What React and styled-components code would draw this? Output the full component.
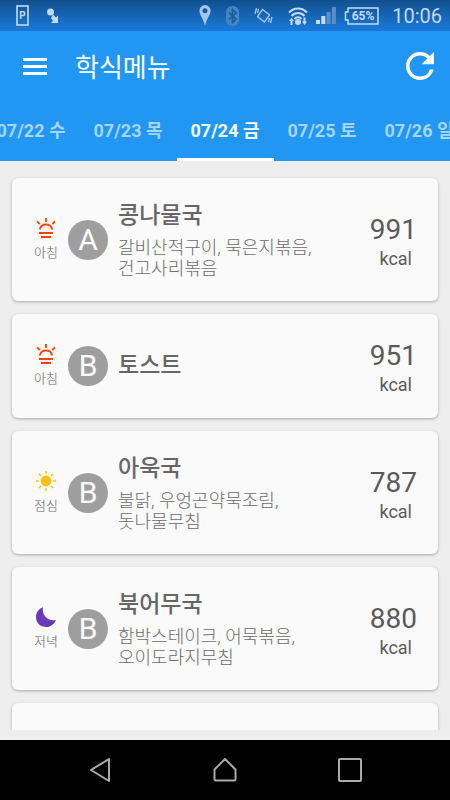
import React from 'react';
import styled, { createGlobalStyle } from 'styled-components';

const GlobalStyle = createGlobalStyle`
  * { box-sizing: border-box; }
  body {
    margin: 0;
    background: #eeeeee;
    font-family: Roboto, "Noto Sans CJK KR", sans-serif;
  }
  button {
    padding: 0;
    border: 0;
    background: none;
    color: inherit;
    font: inherit;
  }
  svg { display: block; }
`;

const Screen = styled.div`
  display: flex;
  flex-direction: column;
  height: 100vh;
  overflow: hidden;
`;

const StatusBar = styled.div`
  display: flex;
  flex: none;
  align-items: center;
  justify-content: space-between;
  height: 31px;
  padding: 0 8px 0 16px;
  background: linear-gradient(#11508f, #1976d2 90%);
  color: #c3daf1;
`;

const StatusGroup = styled.div`
  display: flex;
  align-items: center;
  gap: ${(p) => p.$gap}px;
`;

const Clock = styled.time`
  margin-left: 5px;
  font-size: 20px;
  line-height: 30px;
`;

const AppBar = styled.header`
  display: flex;
  flex: none;
  align-items: center;
  height: 70px;
  padding: 0 16px 0 23px;
  background: #2196f3;
  color: #ffffff;
`;

const AppTitle = styled.h1`
  flex: 1;
  margin: 0 0 0 28px;
  padding-top: 4px;
  font-size: 26px;
  font-weight: 400;
  line-height: 36px;
`;

const IconButton = styled.button`
  flex: none;
  cursor: pointer;
`;

const Tabs = styled.nav`
  display: flex;
  flex: none;
  justify-content: center;
  height: 60px;
  overflow: hidden;
  background: #2196f3;
`;

const Tab = styled.button`
  flex: none;
  width: 97px;
  padding-bottom: 1px;
  border-bottom: 3px solid ${(p) => (p.$active ? '#ffffff' : 'transparent')};
  color: ${(p) => (p.$active ? '#ffffff' : '#a6d5fa')};
  font-size: 18px;
  font-weight: 700;
  white-space: nowrap;
  cursor: pointer;
`;

const MenuList = styled.main`
  display: flex;
  flex: 1;
  flex-direction: column;
  gap: 13px;
  min-height: 0;
  margin-bottom: 10px;
  padding: 17px 12px 0;
  overflow: hidden;
`;

const Card = styled.article`
  display: flex;
  flex: none;
  align-items: center;
  min-height: 104px;
  padding: 22px 21px;
  border-radius: 6px;
  background: #fafafa;
  box-shadow: 0 1px 3px rgba(0, 0, 0, 0.3);
`;

const Meal = styled.div`
  display: flex;
  flex: none;
  flex-direction: column;
  align-items: center;
  gap: 6px;
  width: 26px;
  color: #666666;
  font-size: 13px;
  font-weight: 300;
  line-height: 18px;
  white-space: nowrap;
`;

const Corner = styled.div`
  display: flex;
  flex: none;
  align-items: center;
  justify-content: center;
  width: 40px;
  height: 40px;
  margin-left: 9px;
  border-radius: 50%;
  background: #9e9e9e;
  color: #ffffff;
  font-size: 30px;
  line-height: 40px;
`;

const Dishes = styled.div`
  flex: 1;
  min-width: 0;
  margin-left: 10px;
`;

const MainDish = styled.h2`
  margin: 0;
  color: #666666;
  font-size: 23px;
  font-weight: 500;
  line-height: 32px;
`;

const SideDishes = styled.p`
  margin: 5px 0 0;
  color: #6c6c6c;
  font-size: 18px;
  font-weight: 300;
  line-height: 21px;
  white-space: pre-line;
`;

const Energy = styled.div`
  display: flex;
  flex: none;
  flex-direction: column;
  align-items: flex-end;
  color: #5a5a5a;
`;

const Amount = styled.span`
  font-size: 28px;
  line-height: 38px;
`;

const Unit = styled.span`
  padding-right: 5px;
  font-size: 18px;
  line-height: 20px;
`;

const NavBar = styled.nav`
  display: flex;
  flex: none;
  align-items: center;
  justify-content: center;
  height: 60px;
  background: #000000;
  color: #aaaaaa;
`;

const NavButton = styled.button`
  display: flex;
  flex: 0 0 125px;
  justify-content: center;
`;

const Sunrise = () => (
  <svg width="20" height="20" viewBox="0 0 20 20" fill="none" stroke="#ff4500" strokeWidth="1.8">
    <path d="M10 0v4M1 3.300l2.700 2.700M19 3.300l-2.700 2.700M3.800 11.500c.6-3.300 3-5 6.200-5s5.600 1.700 6.200 5M3 15h14M5 19h10" />
  </svg>
);

const Sun = () => (
  <svg width="20" height="20" viewBox="0 0 20 20" stroke="#ffc107" strokeWidth="1.5">
    <circle cx="10" cy="10" r="5.400" fill="#ffc107" stroke="none" />
    <path d="M10 0v2.700M10 17.300V20M0 10h2.700M17.300 10H20M3 3l1.900 1.900M15.100 15.100L17 17M3 17l1.900-1.900M15.100 4.900L17 3" />
  </svg>
);

const Moon = () => (
  <svg width="20" height="20" viewBox="0 0 20 20" fill="#673ab7">
    <path d="M7 .2C5.600 7.300 11 14.600 20 13c-1.700 4.300-5.600 7-9.700 7C4.500 20 0 15.900 0 10.200 0 5.600 2.600 1.800 7 .2z" />
  </svg>
);

const mealIcons = { 아침: Sunrise, 점심: Sun, 저녁: Moon };

const days = ['07/22 수', '07/23 목', '07/24 금', '07/25 토', '07/26 일'];

const menus = [
  { meal: '아침', corner: 'A', main: '콩나물국', sides: '갈비산적구이, 묵은지볶음,\n건고사리볶음', kcal: 991 },
  { meal: '아침', corner: 'B', main: '토스트', kcal: 951 },
  { meal: '점심', corner: 'B', main: '아욱국', sides: '불닭, 우엉곤약묵조림,\n돗나물무침', kcal: 787 },
  { meal: '저녁', corner: 'B', main: '북어무국', sides: '함박스테이크, 어묵볶음,\n오이도라지무침', kcal: 880 },
];

function MenuCard({ menu }) {
  const MealIcon = mealIcons[menu.meal];
  return (
    <Card>
      <Meal>
        <MealIcon />
        {menu.meal}
      </Meal>
      <Corner>{menu.corner}</Corner>
      <Dishes>
        <MainDish>{menu.main}</MainDish>
        {menu.sides && <SideDishes>{menu.sides}</SideDishes>}
      </Dishes>
      <Energy>
        <Amount>{menu.kcal}</Amount>
        <Unit>kcal</Unit>
      </Energy>
    </Card>
  );
}

const ConnectionIcons = () => (
  <StatusGroup $gap={15}>
    <svg width="12" height="22" viewBox="0 0 12 22">
      <path fillRule="evenodd" fill="#a8c7e6" d="M6 0a5.600 5.600 0 0 0-5.600 5.600C.4 10 4.500 14 6 21c1.500-7 5.600-11 5.600-15.400A5.600 5.600 0 0 0 6 0zm0 3.200a2.500 2.500 0 1 1 0 5 2.500 2.500 0 0 1 0-5z" />
    </svg>
    <svg width="13" height="20" viewBox="0 0 13 20">
      <rect width="13" height="20" rx="6" fill="#4584c2" />
      <path fill="none" stroke="#195d9f" strokeWidth="1.700" d="M3 6.500l7 6.500-3.500 3.500v-13L10 7l-7 6.500" />
    </svg>
    <svg width="19" height="19" viewBox="0 0 19 19" fill="none" stroke="#a8c7e6" strokeWidth="1.300">
      <path d="M8.500 3.500l7 5.500-5 7-7-5.500zM1 8l1.500-6M3.500 7l1-4M18 11l-1.500 6M15.500 12l-1 4" />
    </svg>
    <svg width="20" height="20" viewBox="0 0 20 20" fill="none" stroke="#c3daf1" strokeWidth="2">
      <path d="M1 6.500c5-5.500 13-5.500 18 0M3.500 10c3.600-4 9.400-4 13 0M6.500 13c2-2.200 5-2.200 7 0" />
      <circle cx="10" cy="16" r="3" fill="#c3daf1" stroke="none" />
      <path fill="#c3daf1" stroke="none" d="M1 15l2.500-3L6 15H4.500v4h-2v-4zM14 15.500h1.500v-4h2v4H19L16.500 19z" />
    </svg>
  </StatusGroup>
);

const SignalIcon = () => (
  <svg width="20" height="18" viewBox="0 0 20 18">
    <path fill="#c3daf1" d="M0 13h4v4H0zM5.300 9h4v8h-4z" />
    <path fill="#588fc8" d="M10.600 5h4v12h-4zM15.900 0h4v17h-4z" />
  </svg>
);

const BatteryIcon = () => (
  <svg width="35" height="18" viewBox="0 0 35 18">
    <path fill="none" stroke="#c3daf1" strokeWidth="1.500" d="M4 1h30v16H4v-4H1.500V5H4z" />
    <text x="19" y="13" textAnchor="middle" fill="#c3daf1" fontFamily="Roboto, sans-serif" fontSize="12" fontWeight="700">65%</text>
  </svg>
);

export default function App() {
  return (
    <Screen>
      <GlobalStyle />
      <StatusBar>
        <StatusGroup $gap={18}>
          <svg width="13" height="21" viewBox="0 0 13 21">
            <rect x="1" y="1" width="11" height="19" fill="none" stroke="#c3daf1" strokeWidth="1.600" />
            <text x="6.500" y="14" textAnchor="middle" fill="#c3daf1" fontFamily="Roboto, sans-serif" fontSize="10" fontWeight="700">P</text>
          </svg>
          <svg width="12" height="16" viewBox="0 0 12 16" fill="#c3daf1">
            <circle cx="3.500" cy="4" r="3.500" />
            <path d="M6 6.500l3 3L11 7.500V15H4l2-2-2-3z" />
          </svg>
        </StatusGroup>
        <StatusGroup $gap={8}>
          <ConnectionIcons />
          <SignalIcon />
          <BatteryIcon />
          <Clock>10:06</Clock>
        </StatusGroup>
      </StatusBar>
      <AppBar>
        <IconButton aria-label="메뉴 열기">
          <svg width="24" height="17" viewBox="0 0 24 17" fill="#ffffff">
            <path d="M0 0h24v3H0zM0 7h24v3H0zM0 14h24v3H0z" />
          </svg>
        </IconButton>
        <AppTitle>학식메뉴</AppTitle>
        <IconButton aria-label="새로고침">
          <svg width="28" height="28" viewBox="4 4 16 16" fill="#ffffff">
            <path d="M17.650 6.350A7.958 7.958 0 0 0 12 4c-4.420 0-7.990 3.580-7.990 8s3.570 8 7.990 8c3.730 0 6.840-2.550 7.730-6h-2.080A5.990 5.990 0 0 1 12 18c-3.310 0-6-2.690-6-6s2.690-6 6-6c1.660 0 3.140.69 4.220 1.780L13 11h7V4l-2.350 2.350z" />
          </svg>
        </IconButton>
      </AppBar>
      <Tabs>
        {days.map((day) => (
          <Tab key={day} $active={day === '07/24 금'} aria-current={day === '07/24 금' ? 'date' : undefined}>
            {day}
          </Tab>
        ))}
      </Tabs>
      <MenuList>
        {menus.map((menu) => (
          <MenuCard key={menu.meal + menu.corner} menu={menu} />
        ))}
        <Card />
      </MenuList>
      <NavBar>
        <NavButton aria-label="뒤로">
          <svg width="24" height="26" viewBox="0 0 24 26" fill="none" stroke="currentColor" strokeWidth="2" strokeLinejoin="round">
            <path d="M21 2v22L3 13z" />
          </svg>
        </NavButton>
        <NavButton aria-label="홈">
          <svg width="24" height="26" viewBox="0 0 24 26" fill="none" stroke="currentColor" strokeWidth="2" strokeLinejoin="round">
            <path d="M12 2l10.500 10.500V22q0 1.500-1.500 1.500H3q-1.500 0-1.500-1.500v-9.500z" />
          </svg>
        </NavButton>
        <NavButton aria-label="최근 앱">
          <svg width="24" height="26" viewBox="0 0 24 26" fill="none" stroke="currentColor" strokeWidth="2">
            <rect x="1" y="2" width="22" height="22" rx="1" />
          </svg>
        </NavButton>
      </NavBar>
    </Screen>
  );
}
